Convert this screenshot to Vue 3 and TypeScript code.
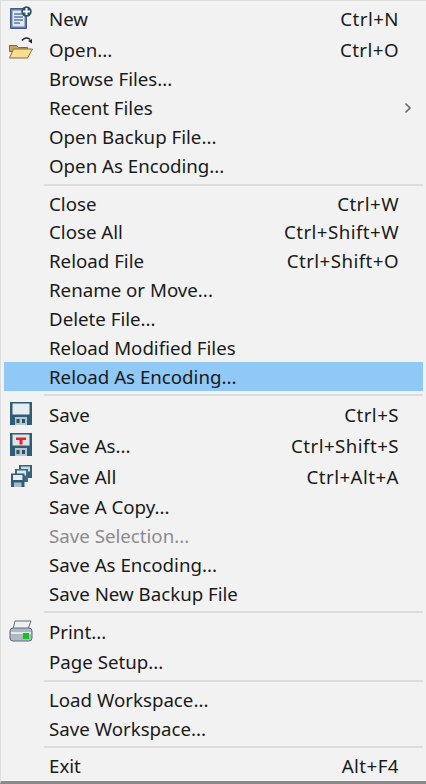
<script setup lang="ts">
type Row = { label?: string; key?: string; icon?: string; tall?: boolean; sep?: boolean; hot?: boolean; off?: boolean; sub?: boolean };
const rows: Row[] = [
  { label: 'New', key: 'Ctrl+N', icon: 'new', tall: true },
  { label: 'Open...', key: 'Ctrl+O', icon: 'open', tall: true },
  { label: 'Browse Files...' },
  { label: 'Recent Files', sub: true },
  { label: 'Open Backup File...' },
  { label: 'Open As Encoding...' },
  { sep: true },
  { label: 'Close', key: 'Ctrl+W' },
  { label: 'Close All', key: 'Ctrl+Shift+W' },
  { label: 'Reload File', key: 'Ctrl+Shift+O' },
  { label: 'Rename or Move...' },
  { label: 'Delete File...' },
  { label: 'Reload Modified Files' },
  { label: 'Reload As Encoding...', hot: true },
  { sep: true },
  { label: 'Save', key: 'Ctrl+S', icon: 'save', tall: true },
  { label: 'Save As...', key: 'Ctrl+Shift+S', icon: 'saveas', tall: true },
  { label: 'Save All', key: 'Ctrl+Alt+A', icon: 'saveall', tall: true },
  { label: 'Save A Copy...' },
  { label: 'Save Selection...', off: true },
  { label: 'Save As Encoding...' },
  { label: 'Save New Backup File' },
  { sep: true },
  { label: 'Print...', icon: 'print', tall: true },
  { label: 'Page Setup...' },
  { sep: true },
  { label: 'Load Workspace...' },
  { label: 'Save Workspace...' },
  { sep: true },
  { label: 'Exit', key: 'Alt+F4' },
];
</script>

<template>
  <div class="menu">
    <template v-for="(r, i) in rows" :key="i">
      <div v-if="r.sep" class="sep"></div>
      <div v-else class="row" :class="{ tall: r.tall, hot: r.hot, off: r.off }">
        <span class="ico">
          <svg v-if="r.icon === 'new'" width="22" height="23" viewBox="0 0 22 23">
            <path d="M0.500 2.500h16v20h-16z" fill="#5f7bb0" stroke="#46597f" />
            <path d="M2.500 4.500h12v16h-12z" fill="#e3e9f3" />
            <path d="M4 8h9M4 11h9M4 14h9M4 17h6" stroke="#5b78ab" stroke-width="1.400" />
            <circle cx="16.500" cy="5.500" r="5.200" fill="#2f4f63" />
            <path d="M16.500 2v7M13 5.500h7" stroke="#fff" stroke-width="2" />
          </svg>
          <svg v-else-if="r.icon === 'open'" width="24" height="22" viewBox="0 0 24 22">
            <path d="M13 3.500c2-3 6-3.500 8-1" fill="none" stroke="#222" stroke-width="1.500" />
            <path d="M23 6.500l-4-2.500 4-2z" fill="#222" />
            <path d="M0.500 8.500h7l2 2h9v4H0.500z" fill="#c9a653" stroke="#7e6a36" />
            <path d="M0.500 21L4.500 12h19l-5 9z" fill="#f8dd92" stroke="#85703a" />
          </svg>
          <svg v-else-if="r.icon === 'save' || r.icon === 'saveas'" width="22" height="23" viewBox="0 0 22 23">
            <path d="M0 0h22v23H0z" fill="#2f5d78" />
            <path d="M2.500 1.500h17v11h-17z" :fill="r.icon === 'save' ? '#e6edf0' : '#dfe5e8'" />
            <path d="M5 15h12v8H5z" fill="#b7c6cf" />
            <path d="M12 17h3v4h-3zM6.500 17h3v4h-3z" fill="#2f4f63" />
            <path v-if="r.icon === 'saveas'" d="M6 4.500h10v2.500h-3.500v4.500h-3V7H6z" fill="#e8202a" />
          </svg>
          <svg v-else-if="r.icon === 'saveall'" width="21" height="22" viewBox="0 0 21 22">
            <path d="M8 0h13v13H8z" fill="#35627e" />
            <path d="M10 1.500h9v5h-9z" fill="#cdd9df" />
            <path d="M4 4h13v13H4z" fill="#3f6c88" />
            <path d="M6 5.500h9v5H6z" fill="#dfe6ea" />
            <path d="M0 8.500h13.500V22H0z" fill="#2f5d78" />
            <path d="M2 10h9.500v5H2z" fill="#e6edf0" />
            <path d="M3 17.500h7.500V22H3z" fill="#a9bcc7" />
          </svg>
          <svg v-else-if="r.icon === 'print'" width="24" height="22" viewBox="0 0 24 22">
            <path d="M6 1h16l-3 8H4z" fill="#eef1f3" stroke="#5c6c78" />
            <path d="M1 11q0-3 3-3h16q3 0 3 3v7q0 3-3 3H4q-3 0-3-3z" fill="#aeb9c2" stroke="#5c6c78" />
            <path d="M2 12h20v2H2z" fill="#e4e8ea" />
            <path d="M14 13h6v6h-6z" fill="#13c41c" />
          </svg>
        </span>
        <span class="label">{{ r.label }}</span>
        <span v-if="r.key" class="key">{{ r.key }}</span>
        <svg v-if="r.sub" class="chev" width="8" height="12" viewBox="0 0 8 12">
          <path d="M1.500 1.500L6 6l-4.500 4.500" fill="none" stroke="#666" stroke-width="1.500" />
        </svg>
      </div>
    </template>
  </div>
</template>

<style>
html, body { margin: 0; background: #f2f2f2; }
</style>

<style scoped>
.menu {
  box-sizing: border-box;
  width: 426px;
  height: 784px;
  padding: 2px 3px 0 3px;
  background: #f2f2f2;
  border-top: 1px solid #dcdcdc;
  border-left: 1px solid #dddddd;
  border-bottom: 3px solid #8a8a8a;
  overflow: hidden;
  font-family: "Noto Sans", "Open Sans", sans-serif;
  font-size: 18.7px;
  color: #1a1a1a;
}
.row {
  display: flex;
  align-items: center;
  height: 28.9px;
}
.row.tall { height: 31px; }
.row.hot { background: #90c8f6; }
.row.off { color: #8b8b8b; }
.ico {
  flex: none;
  width: 45px;
  padding-right: 11px;
  padding-bottom: 3px;
  box-sizing: border-box;
  display: flex;
  justify-content: center;
  align-items: center;
}
.label { flex: 1; margin-top: -1px; }
.key { margin-right: 24px; margin-top: -1px; letter-spacing: 0.45px; }
.chev { margin-right: 11px; margin-top: -1px; }
.sep {
  height: 2px;
  margin: 3px 0 3.5px 40px;
  background: #dcdcdc;
}
</style>
